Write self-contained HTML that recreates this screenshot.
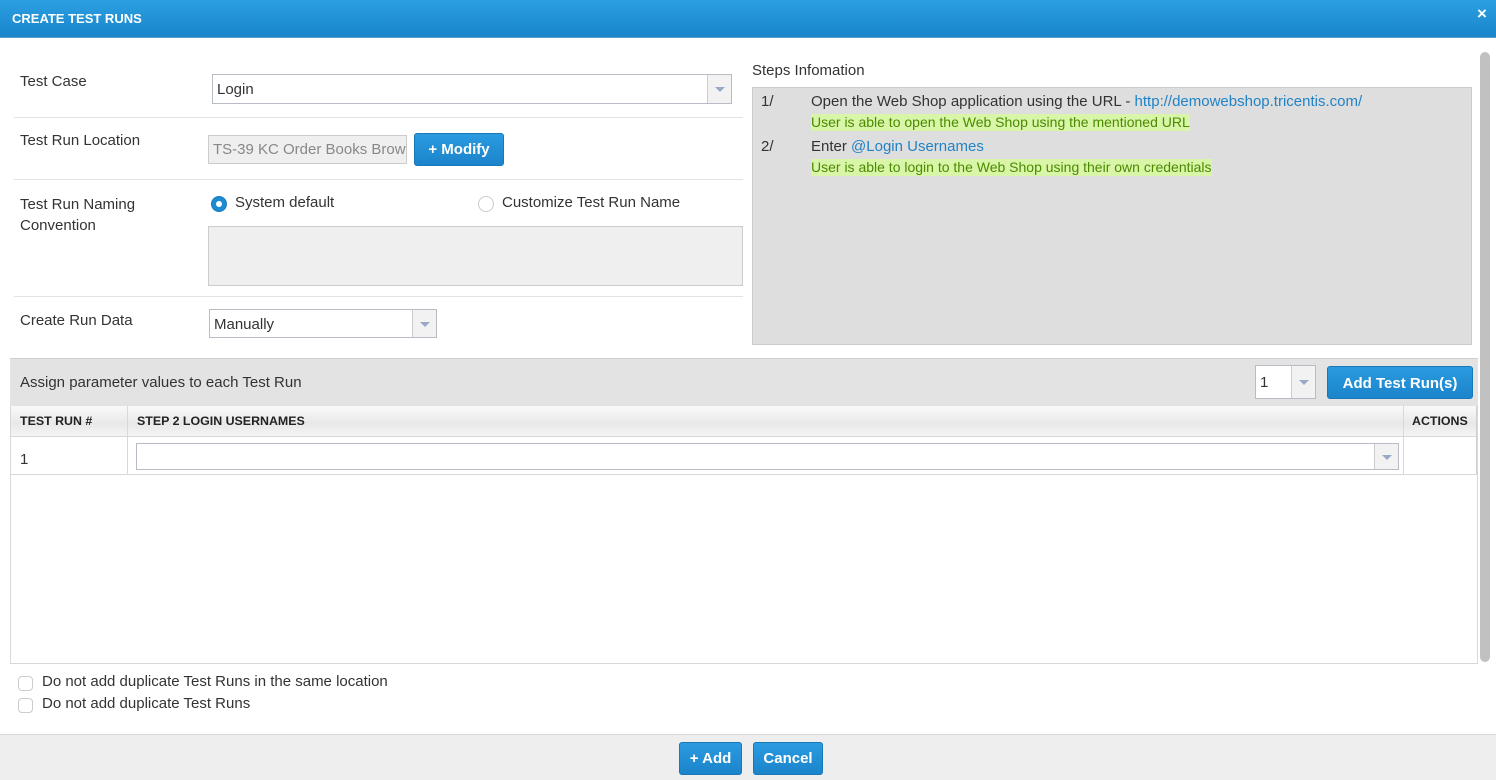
<!DOCTYPE html>
<html><head><style>
*{box-sizing:border-box;margin:0;padding:0}
body{width:1496px;height:780px;position:relative;background:#fff;font-family:"Liberation Sans",Arial,sans-serif;font-size:15px;color:#333;overflow:hidden}
.a{position:absolute}
.hdr{left:0;top:0;width:1496px;height:38px;background:linear-gradient(#2b9fe2,#1a85cb);border-bottom:1px solid #5a9fcf}
.lbl{font-size:15px;color:#333}
.hr{height:1px;background:#e3e3e3}
.sel{border:1px solid #b8bcc4;background:#fff}
.arr{position:absolute;right:0;top:0;bottom:0;width:24px;border-left:1px solid #ccc;background:#f2f2f2}
.arr:after{content:"";position:absolute;left:7px;top:50%;margin-top:-2px;border-left:5px solid transparent;border-right:5px solid transparent;border-top:5px solid #98aac6}
.btn{background:linear-gradient(#2b9be0,#1b84cb);border:1px solid #1a78b8;border-radius:3px;color:#fff;font-weight:bold;text-align:center}
.grn{background:#d9f5a8;color:#4a8b00}
.lnk{color:#1f83c8}
.th{font-size:12.4px;font-weight:bold;color:#222}
.cb{width:15px;height:15px;border:1px solid #ccc;border-radius:4px;background:#fff}
</style></head><body>
<div class="a hdr"></div>
<div class="a" style="left:12px;top:11px;color:#fff;font-weight:bold;font-size:13px">CREATE TEST RUNS</div>
<div class="a" style="left:1477px;top:4px;color:#fff;font-weight:bold;font-size:17px">×</div>

<div class="a lbl" style="left:20px;top:73px">Test Case</div>
<div class="a sel" style="left:212px;top:74px;width:520px;height:30px"><span class="a" style="left:4px;top:6px">Login</span><div class="arr"></div></div>
<div class="a hr" style="left:14px;top:117px;width:729px"></div>

<div class="a lbl" style="left:20px;top:132px">Test Run Location</div>
<div class="a" style="left:208px;top:135px;width:199px;height:29px;background:#efefef;border:1px solid #ccc;color:#888;padding:5px 4px;white-space:nowrap;overflow:hidden">TS-39 KC Order Books Browse</div>
<div class="a btn" style="left:414px;top:133px;width:90px;height:33px;padding-top:7px;font-size:15px">+&nbsp;Modify</div>
<div class="a hr" style="left:14px;top:179px;width:729px"></div>

<div class="a lbl" style="left:20px;top:194px;line-height:21px">Test Run Naming<br>Convention</div>
<div class="a" style="left:211px;top:196px;width:16px;height:16px;border-radius:50%;background:#1e8ad2;border:1px solid #1a7cc0"><div class="a" style="left:4px;top:4px;width:6px;height:6px;border-radius:50%;background:#fff"></div></div>
<div class="a lbl" style="left:235px;top:194px">System default</div>
<div class="a" style="left:478px;top:196px;width:16px;height:16px;border-radius:50%;border:1px solid #ccc"></div>
<div class="a lbl" style="left:502px;top:194px">Customize Test Run Name</div>
<div class="a" style="left:208px;top:226px;width:535px;height:60px;background:#efefef;border:1px solid #ccc"></div>
<div class="a hr" style="left:14px;top:296px;width:729px"></div>

<div class="a lbl" style="left:20px;top:312px">Create Run Data</div>
<div class="a sel" style="left:209px;top:309px;width:228px;height:29px"><span class="a" style="left:4px;top:6px">Manually</span><div class="arr"></div></div>

<div class="a lbl" style="left:752px;top:62px">Steps Infomation</div>
<div class="a" style="left:752px;top:87px;width:720px;height:258px;background:#dedede;border:1px solid #ccc"></div>
<div class="a" style="left:761px;top:93px">1/</div>
<div class="a" style="left:811px;top:93px">Open the Web Shop application using the URL - <span class="lnk">http://demowebshop.tricentis.com/</span></div>
<div class="a grn" style="left:811px;top:114px;font-size:14px;height:17px;line-height:17px">User is able to open the Web Shop using the mentioned URL</div>
<div class="a" style="left:761px;top:138px">2/</div>
<div class="a" style="left:811px;top:138px">Enter <span class="lnk">@Login Usernames</span></div>
<div class="a grn" style="left:811px;top:159px;font-size:14px;height:17px;line-height:17px">User is able to login to the Web Shop using their own credentials</div>

<div class="a" style="left:1480px;top:52px;width:10px;height:610px;background:#c1c1c1;border-radius:5px"></div>

<div class="a" style="left:10px;top:358px;width:1468px;height:306px;border:1px solid #d8d8d8"></div>
<div class="a" style="left:10px;top:358px;width:1468px;height:48px;background:#e3e3e3;border-top:1px solid #d0d0d0"></div>
<div class="a lbl" style="left:20px;top:374px">Assign parameter values to each Test Run</div>
<div class="a sel" style="left:1255px;top:365px;width:61px;height:34px"><span class="a" style="left:4px;top:8px">1</span><div class="arr"></div></div>
<div class="a btn" style="left:1327px;top:366px;width:146px;height:33px;padding-top:8px;font-size:15px">Add Test Run(s)</div>
<div class="a" style="left:11px;top:406px;width:1466px;height:31px;background:linear-gradient(#fafafa,#e8e8e8 60%,#f4f4f4);border-bottom:1px solid #d8d8d8"></div>
<div class="a" style="left:127px;top:406px;width:1px;height:68px;background:#d8d8d8"></div>
<div class="a" style="left:1403px;top:406px;width:1px;height:68px;background:#d8d8d8"></div>
<div class="a" style="left:1476px;top:406px;width:1px;height:68px;background:#d0d0d0"></div>
<div class="a th" style="left:20px;top:414px">TEST RUN #</div>
<div class="a th" style="left:137px;top:414px">STEP 2 LOGIN USERNAMES</div>
<div class="a th" style="left:1412px;top:414px">ACTIONS</div>
<div class="a" style="left:11px;top:474px;width:1466px;height:1px;background:#d8d8d8"></div>
<div class="a lbl" style="left:20px;top:451px">1</div>
<div class="a sel" style="left:136px;top:443px;height:27px;width:1263px"><div class="arr"></div></div>

<div class="a cb" style="left:18px;top:676px"></div>
<div class="a lbl" style="left:42px;top:673px">Do not add duplicate Test Runs in the same location</div>
<div class="a cb" style="left:18px;top:698px"></div>
<div class="a lbl" style="left:42px;top:695px">Do not add duplicate Test Runs</div>

<div class="a" style="left:0;top:734px;width:1496px;height:46px;background:#eeeeee;border-top:1px solid #d8d8d8"></div>
<div class="a btn" style="left:679px;top:742px;width:63px;height:33px;padding-top:7px;font-size:15px">+ Add</div>
<div class="a btn" style="left:753px;top:742px;width:70px;height:33px;padding-top:7px;font-size:15px">Cancel</div>
</body></html>
